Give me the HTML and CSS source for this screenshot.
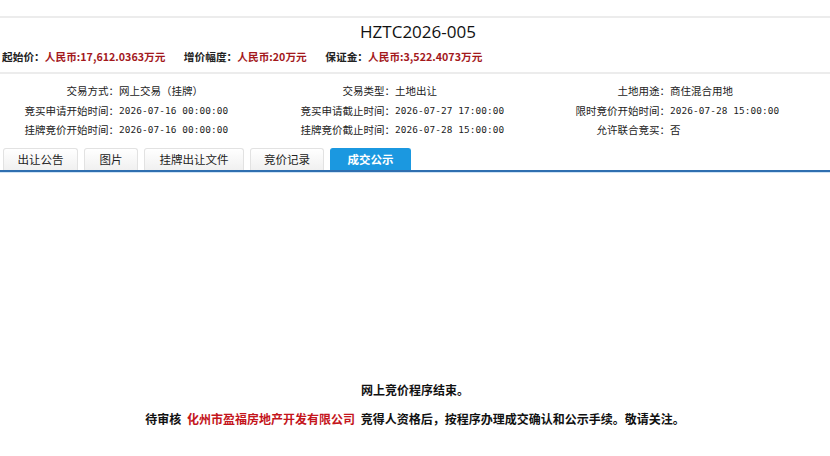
FILE: index.html
```html
<!DOCTYPE html>
<html lang="zh-CN">
<head>
<meta charset="utf-8">
<title>HZTC2026-005</title>
<link rel="stylesheet" href="styles.css">
</head>
<body>
<div class="page">
  <div class="rule rule-top"></div>
  <h1 class="lot-title">HZTC2026-005</h1>
  <div class="price-row">
    <span class="price-label">起始价：</span><span class="price-value">人民币:17,612.0363万元</span>
    <span class="price-label">增价幅度：</span><span class="price-value">人民币:20万元</span>
    <span class="price-label">保证金：</span><span class="price-value">人民币:3,522.4073万元</span>
  </div>
  <div class="rule rule-mid"></div>
  <div class="info-grid">
    <span class="info-label">交易方式：</span><span class="info-value">网上交易（挂牌）</span>
    <span class="info-label">交易类型：</span><span class="info-value">土地出让</span>
    <span class="info-label">土地用途：</span><span class="info-value">商住混合用地</span>

    <span class="info-label">竞买申请开始时间：</span><span class="info-value mono">2026-07-16 00:00:00</span>
    <span class="info-label">竞买申请截止时间：</span><span class="info-value mono">2026-07-27 17:00:00</span>
    <span class="info-label">限时竞价开始时间：</span><span class="info-value mono">2026-07-28 15:00:00</span>

    <span class="info-label">挂牌竞价开始时间：</span><span class="info-value mono">2026-07-16 00:00:00</span>
    <span class="info-label">挂牌竞价截止时间：</span><span class="info-value mono">2026-07-28 15:00:00</span>
    <span class="info-label">允许联合竞买：</span><span class="info-value">否</span>
  </div>
  <div class="tabs">
    <span class="tab tab-w1">出让公告</span>
    <span class="tab tab-w2">图片</span>
    <span class="tab tab-w3">挂牌出让文件</span>
    <span class="tab tab-w4">竞价记录</span>
    <span class="tab tab-w5 active">成交公示</span>
  </div>
  <div class="tab-panel">
    <p class="notice">网上竞价程序结束。</p>
    <p class="notice">待审核 <span class="winner">化州市盈福房地产开发有限公司</span> 竞得人资格后，按程序办理成交确认和公示手续。敬请关注。</p>
  </div>
</div>
</body>
</html>
```

FILE: styles.css
```css
html, body {
  margin: 0;
  padding: 0;
  background: #fff;
}

body {
  font-family: "Noto Sans CJK SC", "Noto Sans", sans-serif;
  color: #222;
  font-size: 11px;
}

.page {
  width: 830px;
  height: 456px;
  overflow: hidden;
  padding-top: 16px;
  box-sizing: border-box;
}

.rule {
  height: 2px;
  background: #ececec;
}

.lot-title {
  margin: 0;
  height: 28px;
  line-height: 28px;
  text-align: center;
  font-family: "Open Sans", "Noto Sans", sans-serif;
  font-weight: 400;
  font-size: 17px;
  color: #111;
  padding-left: 6px;
}

.price-row {
  height: 26px;
  line-height: 22px;
  padding-left: 2px;
  font-weight: 700;
  font-size: 10.7px;
  white-space: nowrap;
}

.price-label {
  color: #222;
}

.price-value {
  color: #a3181c;
  margin-right: 16px;
}

.info-grid {
  display: grid;
  grid-template-columns: 119px 181px 95px 180px 95px 1fr;
  grid-auto-rows: 19.5px;
  align-items: center;
  padding-top: 7px;
  font-size: 10.5px;
  color: #222;
}

.info-label {
  text-align: right;
  white-space: nowrap;
}

.info-value {
  white-space: nowrap;
}

.mono {
  font-family: "DejaVu Sans Mono", "Noto Sans CJK SC", monospace;
  font-size: 9.4px;
  letter-spacing: 0.1px;
}

.tabs {
  display: flex;
  gap: 6px;
  padding: 8px 0 0 3px;
  height: 22px;
  border-bottom: 2px solid #2f6fb0;
  box-shadow: 0 1px 0 #cfe3f5;
}

.tab {
  display: flex;
  align-items: center;
  justify-content: center;
  height: 22px;
  box-sizing: border-box;
  border: 1px solid #e2e2e2;
  border-bottom: none;
  border-radius: 3px 3px 0 0;
  background: linear-gradient(#ffffff, #f0f0f0);
  font-size: 11.5px;
  color: #222;
}

.tab-w1 { width: 75px; }
.tab-w2 { width: 54px; }
.tab-w3 { width: 100px; }
.tab-w4 { width: 74px; }
.tab-w5 { width: 81px; }

.tab.active {
  background: #1b98e0;
  border-color: #1b98e0;
  color: #fff;
  font-weight: 700;
}

.tab-panel {
  padding-top: 209px;
  text-align: center;
  font-weight: 700;
  font-size: 12px;
  color: #111;
}

.notice {
  margin: 0 0 11px;
  line-height: 18px;
}

.winner {
  color: #c4151c;
  margin: 0 3px;
}
```
